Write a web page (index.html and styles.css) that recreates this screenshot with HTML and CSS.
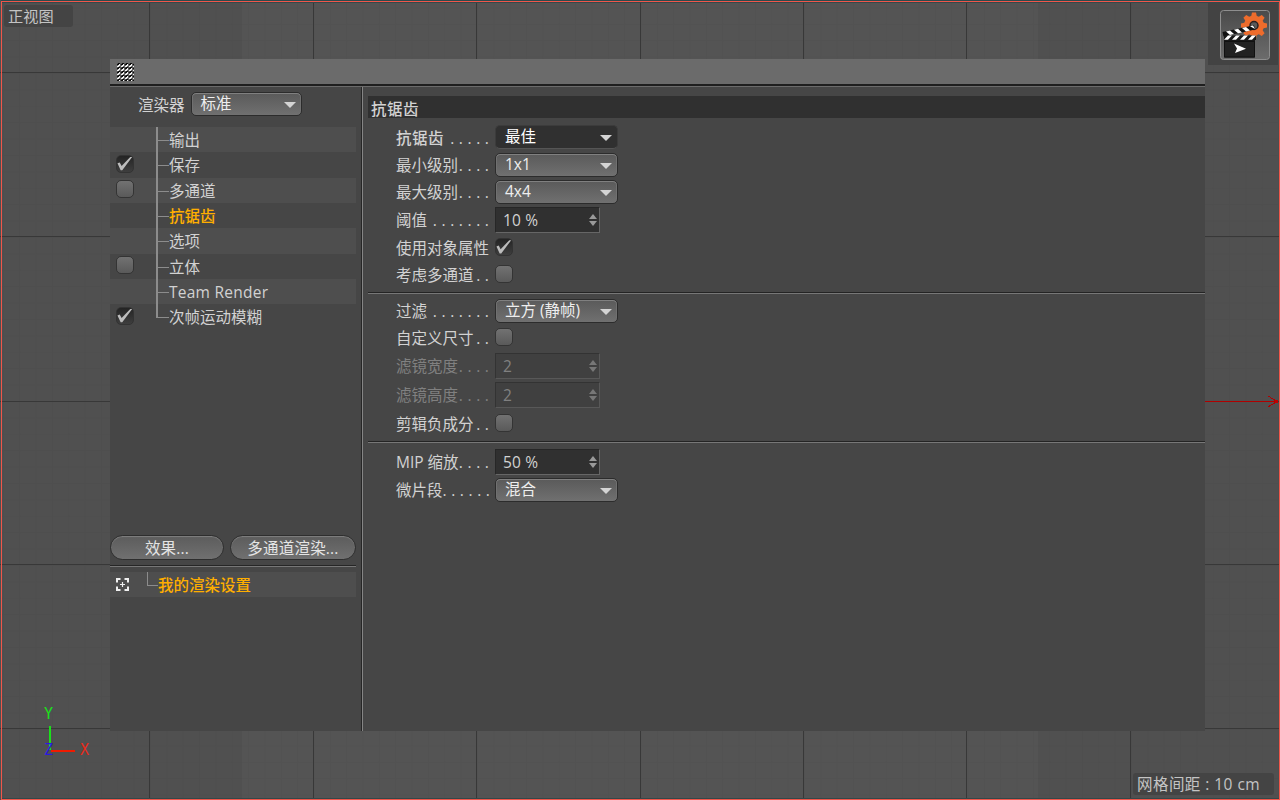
FILE: index.html
```html
<!DOCTYPE html>
<html lang="zh-CN">

<head>
  <meta charset="UTF-8">
  <meta name="viewport" content="width=device-width, initial-scale=1.0">
  <title>渲染设置</title>
  <link rel="stylesheet" href="styles.css">
</head>

<body>
  <div class="viewport">
    <!-- grille de la vue -->
    <svg class="grid" width="1280" height="800" shape-rendering="crispEdges">
      <defs>
        <pattern id="fine" width="16.35" height="16.4" patternUnits="userSpaceOnUse" x="150" y="73">
          <path d="M0 .5H17M.5 0V17" stroke="#000" stroke-opacity=".025" />
        </pattern>
      </defs>
      <rect width="1280" height="800" fill="#505050" />
      <rect x="242" width="796" height="800" fill="#545454" />
      <rect width="1280" height="800" fill="url(#fine)" />
      <path d="M0 72.5H1280M0 236.5H1280M0 401.5H1280M0 564.5H1280M0 728.5H1280" stroke="#383838" />
      <path d="M149.500 0V800M313.500 0V800M476.500 0V800M640.500 0V800M803.500 0V800M966.500 0V800M1130.500 0V800" stroke="#383838" />
      <path d="M1205 401.500H1278" stroke="#b00000" />
      <path d="M1268 396L1277 401.500L1268 407" fill="none" stroke="#b00000" />
      <path d="M1275 400h3v3h-3z" fill="#c00000" />
      <path d="M50 726V750" stroke="#1be01b" stroke-width="2" />
      <path d="M51 750.500H75" stroke="#f01a00" stroke-width="2" />
    </svg>
    <div class="axis axis-y">Y</div>
    <div class="axis axis-z">Z</div>
    <div class="axis axis-x">X</div>
    <div class="hud hud-view">正视图</div>
    <div class="hud hud-grid">网格间距 : 10 cm</div>
    <div class="render-box">
      <svg width="50" height="50" viewBox="0 0 50 50">
        <defs>
          <linearGradient id="btn" x2="0" y2="1">
            <stop offset="0" stop-color="#4a4a4a" />
            <stop offset="1" stop-color="#6c6c6c" />
          </linearGradient>
        </defs>
        <rect x=".5" y=".5" width="49" height="49" rx="3" fill="url(#btn)" stroke="#8e8e8e" />
        <g fill="#ee6c2c">
          <path id="tooth" d="M31 7l1-4.500h4l1 4.500z" />
          <use href="#tooth" transform="rotate(45 34 15.500)" />
          <use href="#tooth" transform="rotate(90 34 15.500)" />
          <use href="#tooth" transform="rotate(135 34 15.500)" />
          <use href="#tooth" transform="rotate(180 34 15.500)" />
          <use href="#tooth" transform="rotate(225 34 15.500)" />
          <use href="#tooth" transform="rotate(270 34 15.500)" />
          <use href="#tooth" transform="rotate(315 34 15.500)" />
          <circle cx="34" cy="15.500" r="10" />
        </g>
        <circle cx="34" cy="15.500" r="4" fill="#5a5a5a" stroke="#2b2020" stroke-width="1.500" />
        <path d="M2.500 22L34 15.200L35 19.600L3.500 26.500z" fill="#111" />
        <path d="M6 21.400l4-.9 4 3.600-4 .9zM14 19.700l4-.9 4 3.600-4 .9zM22 18l4-.9 4 3.500-4 .9zM30 16.200l3-.7 2 3.500z" fill="#fff" />
        <path d="M4 25.500H36V30H35V47.500H4z" fill="#181818" />
        <path d="M8 25.500h4l-4 4.200H4zM16 25.500h4l-4 4.200h-4zM24 25.500h4l-4 4.200h-4zM32 25.500h4l-4 4.200h-4z" fill="#fff" />
        <path d="M4.500 31.500H34.500V47H4.500z" fill="#222" stroke="#111" />
        <path d="M14 33.500l12 5.200-11 4.300 2-4.500z" fill="#fff" />
      </svg>
    </div>
    <div class="frame"></div>
  </div>

  <div class="dialog">
    <div class="titlebar">
      <svg width="18" height="18" shape-rendering="crispEdges">
        <defs>
          <pattern id="grip" width="4" height="4" patternUnits="userSpaceOnUse">
            <rect width="4" height="4" fill="#5c5c5c" />
            <path d="M1 0h2v1H1zM0 1h2v1H0z" fill="#0c0c0c" />
            <path d="M1 2h2v1H1zM0 3h2v1H0zM2 1h1v1H2z" fill="#f2f2f2" />
          </pattern>
        </defs>
        <rect width="17" height="18" fill="url(#grip)" />
      </svg>
    </div>

    <div class="content">
      <div class="side">
        <div class="renderer">
          <span>渲染器</span>
          <div class="combo">标准</div>
        </div>

        <div class="tree">
          <div class="item"><i></i><b></b><span>输出</span></div>
          <div class="item"><i class="check on"></i><b></b><span>保存</span></div>
          <div class="item"><i class="check"></i><b></b><span>多通道</span></div>
          <div class="item selected"><i></i><b></b><span>抗锯齿</span></div>
          <div class="item"><i></i><b></b><span>选项</span></div>
          <div class="item"><i class="check"></i><b></b><span>立体</span></div>
          <div class="item"><i></i><b></b><span class="latin">Team Render</span></div>
          <div class="item"><i class="check on"></i><b></b><span>次帧运动模糊</span></div>
        </div>

        <div class="buttons">
          <div class="button effect">效果...</div>
          <div class="button multipass">多通道渲染...</div>
        </div>

        <div class="preset">
          <svg width="13" height="13" viewBox="0 0 13 13" fill="none" stroke="#f0f0f0" stroke-width="2">
            <path d="M1 4.500V1h3.500M8.500 1H12v3.500M12 8.500V12H8.500M4.500 12H1V8.500" />
            <path d="M6.500 4v5M4 6.500h5" stroke-width="1.200" />
          </svg>
          <b></b><span>我的渲染设置</span>
        </div>
      </div>

      <div class="main">
        <div class="heading">抗锯齿</div>
        <div class="group group-aa">
          <div class="row h27"><label><span class="strong">抗锯齿</span><em>.....</em></label><div class="combo open">最佳</div></div>
          <div class="row h27"><label>最小级别<em>....</em></label><div class="combo">1x1</div></div>
          <div class="row h27"><label>最大级别<em>....</em></label><div class="combo">4x4</div></div>
          <div class="row h30"><label>阈值<em>.......</em></label><div class="number">10 %</div></div>
          <div class="row h26"><label>使用对象属性</label><i class="check on"></i></div>
          <div class="row h27"><label>考虑多通道<em>..</em></label><i class="check"></i></div>
        </div>
        <div class="group group-filter">
          <div class="row h27"><label>过滤<em>.......</em></label><div class="combo">立方 (静帧)</div></div>
          <div class="row h27"><label>自定义尺寸<em>..</em></label><i class="check"></i></div>
          <div class="row h29 disabled"><label>滤镜宽度<em>....</em></label><div class="number">2</div></div>
          <div class="row h30 disabled"><label>滤镜高度<em>....</em></label><div class="number">2</div></div>
          <div class="row h27"><label>剪辑负成分<em>..</em></label><i class="check"></i></div>
        </div>
        <div class="group group-mip">
          <div class="row h29"><label>MIP 缩放<em>....</em></label><div class="number">50 %</div></div>
          <div class="row h27"><label>微片段<em>......</em></label><div class="combo">混合</div></div>
        </div>
      </div>
    </div>
  </div>
</body>

</html>
```
FILE: styles.css
```css
* {
  box-sizing: border-box;
}

body {
  margin: 0;
  height: 800px;
  overflow: hidden;
  background: #505050;
  color: #d2d2d2;
  font: 15.5px/20px "Open Sans", "Noto Sans CJK SC", sans-serif;
  white-space: nowrap;
}

/* vue 3D derrière la fenêtre */
.viewport {
  position: absolute;
  inset: 0;
}

.grid {
  display: block;
}

.frame {
  position: absolute;
  inset: 1px 0 0 1px;
  border: 1px solid #f0564a;
  box-shadow: 0 -1px #2c4a4d, inset 0 1px #34484a, inset 0 -1px #34484a;
}

.axis {
  position: absolute;
  font: 15px/16px "DejaVu Sans Mono", monospace;
}

.axis-y {
  left: 44px;
  top: 706px;
  color: #1be01b;
}

.axis-z {
  left: 44px;
  top: 742px;
  color: #2a1ae0;
}

.axis-x {
  left: 80px;
  top: 742px;
  color: #e82a1a;
}

.hud {
  position: absolute;
  background: #444;
  border-radius: 3px;
  color: #c4c4c4;
}

.hud-view {
  left: 4px;
  top: 5px;
  width: 69px;
  height: 22px;
  padding: 1px 4px;
  font-size: 15.2px;
}

.hud-grid {
  left: 1133px;
  top: 773px;
  width: 141px;
  height: 22px;
  padding: 1px 4px;
  letter-spacing: .45px;
}

.render-box {
  position: absolute;
  left: 1208px;
  top: 2px;
  width: 70px;
  height: 63px;
  padding: 8px 12px;
  background: #434343;
}

/* fenêtre des réglages */
.dialog {
  position: absolute;
  left: 110px;
  top: 59px;
  width: 1095px;
  height: 672px;
  display: flex;
  flex-direction: column;
  background: #464646;
}

.titlebar {
  height: 28px;
  padding: 4px 7px;
  background: #6b6b6b;
  border-bottom: 1px solid #6b6b6b;
  box-shadow: inset 0 -2px #1f1f1f;
}

.content {
  flex: 1;
  display: flex;
}

.side {
  width: 253px;
  display: flex;
  flex-direction: column;
  border-right: 1px solid #858585;
  box-shadow: inset -1px 0 #262626;
}

.renderer {
  display: flex;
  align-items: center;
  gap: 6px;
  height: 40px;
  padding: 0 0 5px 28px;
}

.combo {
  position: relative;
  width: 123px;
  height: 24px;
  padding: 0 9px;
  border: 1px solid #2c2c2c;
  border-radius: 5px;
  background: linear-gradient(#5a5a5a, #707070);
  box-shadow: inset 0 1px #808080, inset 0 0 0 1px #707070;
  color: #eee;
  line-height: 20px;
}

.combo::after {
  content: "";
  position: absolute;
  right: 5px;
  top: 9px;
  border: 6px solid transparent;
  border-top-color: #d4d4d4;
  border-bottom: 0;
}

.combo.open {
  background: #303030;
  border-color: #3c3c3c;
  border-bottom-color: #555;
  box-shadow: none;
  color: #fff;
}

.renderer .combo {
  width: 111px;
  margin-top: -1px;
}

.check {
  width: 18px;
  height: 18px;
  border: 1px solid #343434;
  border-radius: 5px;
  background: linear-gradient(#727272, #5a5a5a);
}

.check.on {
  position: relative;
  background: linear-gradient(#242424, #3e3e3e);
  border-color: #333;
}

.check.on::after {
  content: "";
  position: absolute;
  inset: 0 0 1px 0;
  background: #bcbcbc;
  clip-path: polygon(6% 50%, 20% 44%, 32% 68%, 86% 8%, 98% 8%, 36% 96%, 26% 96%);
}

.item {
  display: flex;
  height: 25.35px;
  width: 246px;
}

.item i {
  width: 18px;
  height: 18px;
  margin: 2.5px 0 0 5.5px;
}

.item b {
  width: 13px;
  height: 14px;
  margin: 0 0 0 22.5px;
  border-bottom: 1px solid #8c8c8c;
}

.item span {
  line-height: 26px;
}

.item .latin {
  letter-spacing: .25px;
}

.tree {
  height: 408px;
  background: linear-gradient(#8c8c8c, #8c8c8c) 46px 0 / 2px 191px no-repeat;
}

.item:nth-child(odd) {
  background: linear-gradient(#8c8c8c, #8c8c8c) 46px 0 / 2px 100% no-repeat #4e4e4e;
}

.selected span,
.preset span {
  color: #ffae00;
  font-weight: 500;
}

.buttons {
  display: flex;
  gap: 6px;
  height: 30px;
}

.button {
  height: 25px;
  border: 1px solid #2e2e2e;
  border-radius: 13px;
  background: linear-gradient(#5c5c5c, #707070);
  box-shadow: inset 0 1px 1px #808080;
  text-align: center;
  line-height: 24px;
  letter-spacing: .2px;
  color: #e4e4e4;
}

.effect {
  width: 114px;
}

.multipass {
  width: 126px;
}

.preset {
  display: flex;
  width: 246px;
  height: 32px;
  border-top: 1px solid #262626;
  background: linear-gradient(#777 1px, #464646 1px, #464646 6px, #4e4e4e 6px);
}

.preset svg {
  margin: 12px 0 0 6px;
}

.preset b {
  width: 11px;
  height: 14px;
  margin: 6px 0 0 18px;
  border: solid #8c8c8c;
  border-width: 0 0 1px 1px;
}

.preset span {
  line-height: 38px;
}

.main {
  flex: 1;
  padding: 9px 0 0 5px;
}

.heading {
  height: 22px;
  padding-left: 3px;
  background: #303030;
  font-weight: 500;
  line-height: 26px;
  letter-spacing: .5px;
}

.group {
  padding-left: 28px;
}

.group-aa {
  height: 174px;
  padding-top: 6px;
}

.group-filter {
  height: 149px;
  padding-top: 4px;
  border-top: 1px solid #242424;
  box-shadow: inset 0 1px #777;
}

.group-mip {
  padding-top: 5px;
  border-top: 1px solid #242424;
  box-shadow: inset 0 1px #777;
}

.row {
  display: flex;
  align-items: center;
}

.h26 {
  height: 26px;
}

.h27 {
  height: 27px;
}

.h29 {
  height: 29px;
}

.h30 {
  height: 30px;
}

.row label {
  display: flex;
  justify-content: space-between;
  width: 94px;
  margin-right: 5px;
}

/* points de conduite, alignés à droite */
.row em {
  margin-right: -3.5px;
  font-style: normal;
  letter-spacing: 4.6px;
}

.row .check {
  margin: 0 0 2px -.5px;
}

.strong {
  font-weight: 500;
  letter-spacing: .5px;
}

.combo.open {
  margin-top: -2px;
}

.number {
  position: relative;
  width: 105px;
  height: 26px;
  padding: 0 7px;
  border: 1px solid #272727;
  border-right-color: #666;
  border-bottom-color: #666;
  background: #303030;
  line-height: 25px;
  letter-spacing: .2px;
}

.number::before,
.number::after {
  content: "";
  position: absolute;
  right: 2px;
  border: 4px solid transparent;
}

.number::before {
  top: 6px;
  border-bottom: 5px solid #999;
  border-top: 0;
}

.number::after {
  top: 13px;
  border-top: 5px solid #999;
  border-bottom: 0;
}

.disabled label,
.disabled .number {
  color: #808080;
}

.disabled .number {
  background: #404040;
  border-color: #333 #585858 #585858 #333;
}

.disabled .number::before {
  border-bottom-color: #777;
}

.disabled .number::after {
  border-top-color: #777;
}
```
